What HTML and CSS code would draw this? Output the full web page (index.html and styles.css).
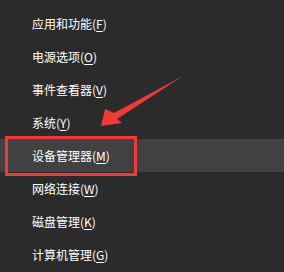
FILE: index.html
```html
<!DOCTYPE html>
<html lang="zh-CN">
<head>
    <meta charset="UTF-8">
    <meta name="viewport" content="width=device-width, initial-scale=1.0">
    <title>WinX 菜单</title>
    <link rel="stylesheet" href="styles.css">
</head>
<body>
    <ul class="menu">
        <li class="menu-item">应用和功能(<u>F</u>)</li>
        <li class="menu-item">电源选项(<u>O</u>)</li>
        <li class="menu-item">事件查看器(<u>V</u>)</li>
        <li class="menu-item">系统(<u>Y</u>)</li>
        <li class="menu-item active">
            设备管理器(<u>M</u>)
            <span class="mark-box"></span>
        </li>
        <li class="menu-item">网络连接(<u>W</u>)</li>
        <li class="menu-item">磁盘管理(<u>K</u>)</li>
        <li class="menu-item">计算机管理(<u>G</u>)</li>
    </ul>

    <!-- Annotation arrow pointing at the highlighted entry -->
    <svg class="mark-arrow" width="284" height="272" viewBox="0 0 284 272">
        <polygon points="183,76 114,113 105,109 101,126 122,123 117,119" fill="#f03a3a"/>
    </svg>
</body>
</html>
```

FILE: styles.css
```css
* {
    margin: 0;
    padding: 0;
    box-sizing: border-box;
}

body {
    font-family: "Noto Sans CJK SC", "Noto Sans", sans-serif;
    background-color: #2b2b2b;
    color: #ffffff;
    width: 284px;
    height: 272px;
    overflow: hidden;
    position: relative;
}

.menu {
    list-style: none;
    padding-top: 7px;
}

.menu-item {
    position: relative;
    height: 33px;
    line-height: 33px;
    padding-left: 32px;
    font-size: 12px;
    white-space: nowrap;
}

.menu-item u {
    text-decoration-thickness: 1px;
    text-underline-offset: 2px;
}

.menu-item.active {
    background-color: #414141;
}

/* Red annotation frame around the highlighted entry */
.mark-box {
    position: absolute;
    left: 5px;
    top: -3px;
    width: 132px;
    height: 40px;
    border: 3px solid #f03a3a;
}

.mark-arrow {
    position: absolute;
    left: 0;
    top: 0;
}
```
